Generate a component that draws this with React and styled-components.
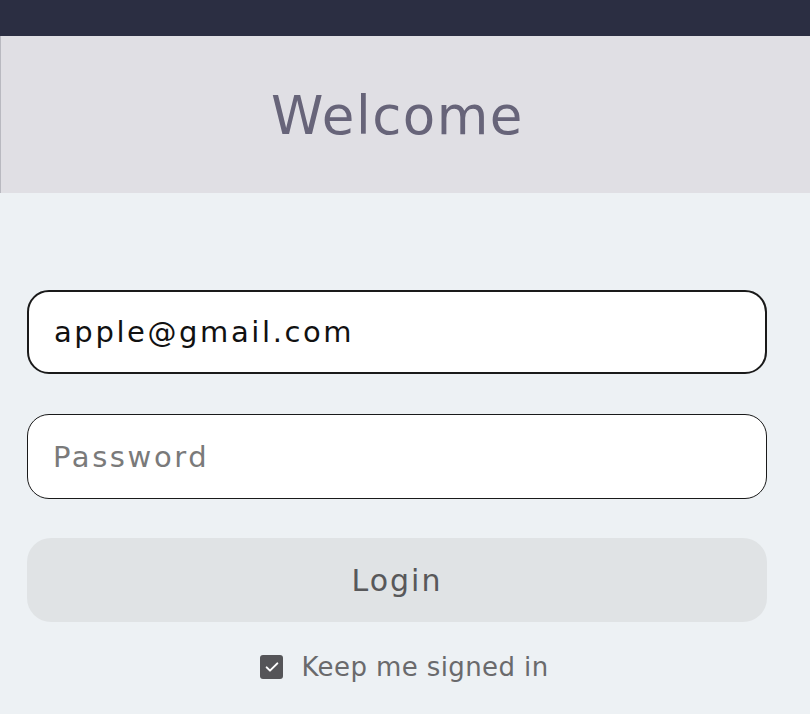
import styled, { createGlobalStyle } from "styled-components";

const Global = createGlobalStyle`
  body {
    margin: 0;
    background: #edf1f4;
    font-family: "DejaVu Sans", "Noto Sans", sans-serif;
  }
`;

const TopBar = styled.div`
  height: 36px;
  background: #2b2e42;
`;

const Header = styled.header`
  height: 157px;
  padding-right: 16px;
  background: #e0dfe4;
  border-left: 1px solid #b9b9c0;
  display: flex;
  align-items: center;
  justify-content: center;
`;

const Title = styled.h1`
  margin: 2px 0 0;
  font-size: 53px;
  font-weight: 400;
  color: #676479;
  letter-spacing: 1.5px;
`;

const Form = styled.form`
  display: flex;
  flex-direction: column;
  gap: 40px;
  padding: 97px 43px 0 27px;
`;

const Field = styled.input`
  box-sizing: border-box;
  height: ${(p) => (p.$active ? "84px" : "85px")};
  padding: 0 25px;
  border: ${(p) => (p.$active ? "2px solid #1a1a1a" : "1px solid #1a1a1a")};
  border-radius: 22px;
  background: #fff;
  font-family: inherit;
  font-size: 29px;
  letter-spacing: 2.6px;
  color: #111;
  outline: none;
  caret-color: #111;

  &::placeholder {
    color: #7a7a7a;
  }
`;

const LoginButton = styled.button`
  height: 84px;
  border: none;
  border-radius: 24px;
  background: #e0e3e5;
  font-family: inherit;
  font-size: 30px;
  letter-spacing: 2px;
  color: #58585a;
  margin-top: -1px;
`;

const Remember = styled.label`
  display: flex;
  align-items: center;
  justify-content: center;
  gap: 18px;
  margin-top: -10px;
  padding-left: 15px;
  font-size: 26px;
  letter-spacing: 0.4px;
  color: #6a6a6c;
`;

const Box = styled.span`
  width: 23px;
  height: 24px;
  border-radius: 3px;
  background: #555558;
  display: flex;
  align-items: center;
  justify-content: center;
`;

export default function App() {
  return (
    <>
      <Global />
      <TopBar />
      <Header>
        <Title>Welcome</Title>
      </Header>
      <Form onSubmit={(e) => e.preventDefault()}>
        <Field $active autoFocus type="email" defaultValue="apple@gmail.com" />
        <Field type="password" placeholder="Password" />
        <LoginButton type="submit">Login</LoginButton>
        <Remember>
          <Box>
            <svg width="16" height="16" viewBox="0 0 24 24" fill="none" stroke="#fff" strokeWidth="3" strokeLinecap="round" strokeLinejoin="round">
              <path d="M4 12.5l5 5L20 6.5" />
            </svg>
          </Box>
          Keep me signed in
        </Remember>
      </Form>
    </>
  );
}
